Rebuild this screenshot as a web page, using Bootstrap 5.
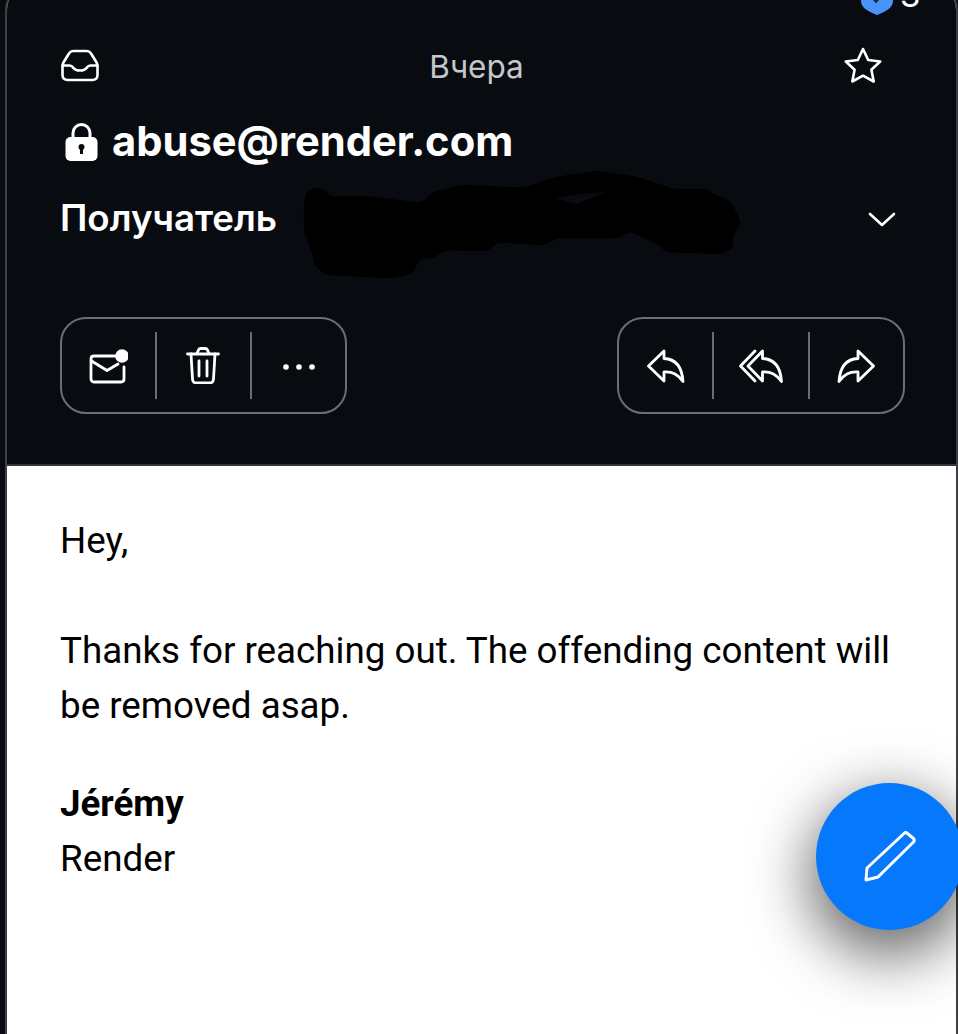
<!DOCTYPE html>
<html lang="ru">
<head>
    <meta charset="UTF-8">
    <title>abuse@render.com</title>
    <link href="https://cdn.jsdelivr.net/npm/bootstrap@5.3.0/dist/css/bootstrap.min.css" rel="stylesheet">
    <style>
        html, body { height: 100%; }
        body { background: #080b10; overflow: hidden; }
        .frame { position: relative; width: 958px; height: 1034px; overflow: hidden; background: #080b10; padding-left: 5px; }
        .sheet { height: 1060px; margin-top: -16px; background: #fff; border: solid #3c3f44; border-width: 0 2px; border-radius: 26px 26px 0 0; overflow: hidden; }
        .mail-head { height: 482px; background: #080b10; border-bottom: 2px solid #34363b; padding: 60px 51px 0 54px; color: #fff; font-family: Inter, "Noto Sans", sans-serif; }
        .top-row { height: 44px; padding-right: 23px; }
        .top-row svg { margin-bottom: 2px; }
        .day-label { font-size: 31.500px; color: #c5c7ca; margin: 2px 0 0 10px; }
        .from-row { height: 44px; margin-top: 31px; gap: 14px; font-size: 41.700px; font-weight: 700; padding-left: 4px; }
        .from-row svg { margin-top: 2px; }
        .to-row { height: 44px; margin-top: 33px; margin-left: -1px; font-size: 36.700px; font-weight: 600; padding-right: 9px; }
        .to-row svg { margin-top: 2px; }
        .tool-row { margin-top: 77px; }
        .tool-group { width: 288px; height: 97px; border: 2px solid #6b6e74; border-radius: 26px; }
        .tool-group.left-tools { width: 287px; margin-left: -1px; }
        .tool-btn { flex: 1 1 0; background: none; border: 0; padding: 0; color: #fff; }
        .left-tools .tool-btn svg { margin-right: 2px; }
        .left-tools .tool-btn:last-child svg { margin-right: 0; }
        .tool-sep { width: 2px; height: 67px; background: #6b6e74; }
        .mail-text { padding: 47px 60px 0 53px; font-family: Roboto, "Liberation Sans", sans-serif; font-size: 36.750px; line-height: 55px; color: #000; }
        .sign-gap { height: 43px; }
        .sign-name { font-weight: 700; }
        .fab-btn { position: absolute; left: 816px; top: 783px; width: 147px; height: 147px; border-radius: 50%; background: #0678fb; box-shadow: 0 20px 60px 6px rgba(0,0,0,.6); }
        .scribble { position: absolute; left: 0; top: 0; }
        .verified { position: absolute; left: 861px; top: -18px; gap: 7px; color: #fff; font-family: Inter, sans-serif; font-size: 33px; line-height: 36px; }
        .verified span { margin-top: -5px; }
    </style>
</head>
<body>
    <div class="frame">
        <div class="sheet">
            <!-- Шапка письма -->
            <header class="mail-head">
                <div class="top-row d-flex align-items-center justify-content-between">
                    <svg width="38" height="33" viewBox="0 0 38 33" fill="none" stroke="#fff" stroke-width="2.600" stroke-linejoin="round" stroke-linecap="round"><path d="M12 2h14c2 0 3 1 4 2.500l5 8c1 1.500 1.500 3 1.500 4.500v9c0 3-2 5-5 5H6.500c-3 0-5-2-5-5v-9c0-1.500.5-3 1.500-4.500l5-8C9 3 10 2 12 2z"/><path d="M1.500 16.500h7c2 0 3 1 4 2.500 1 1.500 2.500 2.500 6.500 2.500s5.500-1 6.500-2.500c1-1.500 2-2.500 4-2.500h7"/></svg>
                    <span class="day-label">Вчера</span>
                    <svg width="38" height="36" viewBox="0 0 38 36" fill="none" stroke="#fff" stroke-width="2.600" stroke-linejoin="round"><path d="M19 2l5.200 11 12 1.500-8.800 8.300 2.300 11.700L19 28.700 8.300 34.500l2.300-11.700L1.800 14.500l12-1.500z"/></svg>
                </div>
                <div class="from-row d-flex align-items-center">
                    <svg width="33" height="38" viewBox="0 0 33 38"><path d="M8 16V10a8.500 8.500 0 0 1 17 0v6" fill="none" stroke="#fff" stroke-width="3"/><rect x="0.500" y="14" width="32" height="24" rx="5" fill="#fff"/><circle cx="16.500" cy="24" r="3" fill="#080b10"/><rect x="15" y="25" width="3" height="6" fill="#080b10"/></svg>
                    <span>abuse@render.com</span>
                </div>
                <div class="to-row d-flex align-items-center justify-content-between">
                    <span>Получатель</span>
                    <svg width="28" height="15" viewBox="0 0 28 15" fill="none" stroke="#fff" stroke-width="2.600" stroke-linecap="round" stroke-linejoin="round"><path d="M2 2l12 11L26 2"/></svg>
                </div>
                <div class="tool-row d-flex justify-content-between">
                    <div class="tool-group left-tools d-flex align-items-center">
                        <button class="tool-btn" type="button" aria-label="Непрочитанное">
                            <svg width="40" height="36" viewBox="0 0 40 36" fill="none" stroke="#fff" stroke-width="2.800" stroke-linecap="round" stroke-linejoin="round"><path d="M36 19v12c0 2-1.500 3-3 3H6c-2 0-3-1.500-3-3V11c0-2 1.500-3 3-3h22"/><path d="M3.500 13L19 22.500 30 16"/><circle cx="34" cy="8" r="6.800" fill="#fff" stroke="none"/></svg>
                        </button>
                        <span class="tool-sep"></span>
                        <button class="tool-btn" type="button" aria-label="Удалить">
                            <svg width="34" height="37" viewBox="0 0 34 37" fill="none" stroke="#fff" stroke-width="2.800" stroke-linecap="round" stroke-linejoin="round"><path d="M1.500 7h31"/><path d="M11 6.500l1.500-3.500c.5-1 1-1.500 2-1.500h5c1 0 1.500.5 2 1.500L23 6.500"/><path d="M5 7l1.500 25c.2 2.500 1.500 4 4 4h13c2.500 0 3.800-1.500 4-4L29 7"/><path d="M13 14v15M21 14v15"/></svg>
                        </button>
                        <span class="tool-sep"></span>
                        <button class="tool-btn" type="button" aria-label="Ещё">
                            <svg width="32" height="6" viewBox="0 0 32 6" fill="#fff"><circle cx="3" cy="3" r="2.800"/><circle cx="16" cy="3" r="2.800"/><circle cx="29" cy="3" r="2.800"/></svg>
                        </button>
                    </div>
                    <div class="tool-group d-flex align-items-center">
                        <button class="tool-btn" type="button" aria-label="Ответить">
                            <svg width="38" height="34" viewBox="0 0 38 34" fill="none" stroke="#fff" stroke-width="2.800" stroke-linejoin="round"><path d="M1.500 17L17 2v7.500c11 .5 18 8 19 23-5-7-10-10-19-9.500V32z"/></svg>
                        </button>
                        <span class="tool-sep"></span>
                        <button class="tool-btn" type="button" aria-label="Ответить всем">
                            <svg width="44" height="34" viewBox="0 0 44 34" fill="none" stroke="#fff" stroke-width="2.800" stroke-linejoin="round" stroke-linecap="round"><path d="M16 2L1.500 17 16 32"/><path d="M9 17L23.500 2v7.500c11 .5 18 8 19 23-5-7-10-10-19-9.500V32z"/></svg>
                        </button>
                        <span class="tool-sep"></span>
                        <button class="tool-btn" type="button" aria-label="Переслать">
                            <svg width="38" height="34" viewBox="0 0 38 34" fill="none" stroke="#fff" stroke-width="2.800" stroke-linejoin="round"><path d="M36.500 17L21 2v7.500c-11 .5-18 8-19 23 5-7 10-10 19-9.500V32z"/></svg>
                        </button>
                    </div>
                </div>
            </header>

            <!-- Текст письма -->
            <main class="mail-text">
                <div>Hey,<br><br>Thanks for reaching out. The offending content will be removed asap.</div>
                <div class="sign-gap"></div>
                <div class="sign-name">Jérémy</div>
                <div>Render</div>
            </main>
        </div>

        <div class="verified d-flex align-items-start">
            <svg width="32" height="33" viewBox="0 0 32 33"><path d="M16 0 32 4v15c0 7-8 11-16 14C8 30 0 26 0 19V4z" fill="#4a94f9"/><path d="M10 14l5 5 7-8" fill="none" stroke="#14253f" stroke-width="3"/></svg>
            <span>3</span>
        </div>

        <!-- Закрашенный адрес -->
        <svg class="scribble" width="958" height="300" viewBox="0 0 958 300">
            <filter id="soft" x="-5%" y="-20%" width="110%" height="140%"><feGaussianBlur stdDeviation="3"/><feColorMatrix values="0 0 0 0 0 0 0 0 0 0 0 0 0 0 0 0 0 0 14 -6"/></filter>
            <path filter="url(#soft)" fill="#000" stroke="#000" stroke-width="4" stroke-linejoin="round" d="M306 205 308 193 317 189 326 194 328 199 363 198 423 205 434 194 463 187 523 190 557 179 597 173 637 179 673 191 707 191 716 198 729 202 734 213 739 223 731 234 731 247 720 252 667 250 658 242 630 229 617 236 557 236 543 243 497 240 487 249 443 248 433 256 417 258 412 271 393 276 327 273 316 264 314 251 306 232z"/>
            <path fill="#080b10" d="M555 198 580 194 607 192 577 204z"/>
        </svg>

        <div class="fab-btn d-flex align-items-center justify-content-center">
            <svg width="54" height="54" viewBox="0 0 54 54" fill="none" stroke="#fff" stroke-width="3" stroke-linejoin="round"><path d="M41 3.500c1-1 2.500-1 3.500 0l6 5c1 1 1 2.500 0 3.500L15 47 3 50l1-12z"/></svg>
        </div>
    </div>

    <script src="https://cdn.jsdelivr.net/npm/bootstrap@5.3.0/dist/js/bootstrap.bundle.min.js"></script>
</body>
</html>
